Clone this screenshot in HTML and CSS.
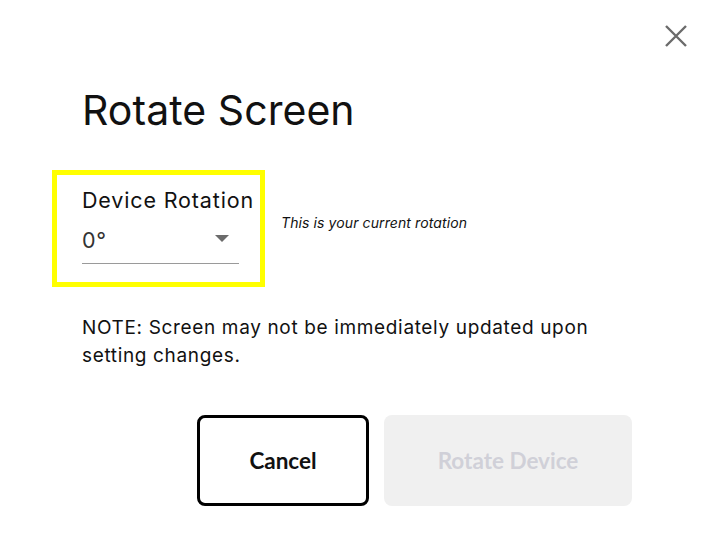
FILE: index.html
```html
<!DOCTYPE html>
<html>
<head>
<meta charset="utf-8">
<link rel="stylesheet" href="styles.css">
</head>
<body>
<div class="modal">
  <button class="close" aria-label="Close">
    <svg width="22" height="22" viewBox="0 0 22 22"><path d="M1 1 L21 21 M21 1 L1 21" stroke="#6b6b6b" stroke-width="2.4" fill="none"/></svg>
  </button>
  <h1 class="title">Rotate Screen</h1>
  <div class="row">
    <div class="field">
      <div class="label">Device Rotation</div>
      <div class="select">
        <span class="value">0°</span>
        <span class="arrow"></span>
      </div>
    </div>
    <div class="hint">This is your current rotation</div>
  </div>
  <p class="note">NOTE: Screen may not be immediately updated upon setting changes.</p>
  <div class="actions">
    <button class="btn cancel">Cancel</button>
    <button class="btn primary" disabled>Rotate Device</button>
  </div>
</div>
</body>
</html>
```
FILE: styles.css
```css
html, body { margin: 0; padding: 0; background: #fff; }
body { width: 714px; height: 553px; overflow: hidden; font-family: Inter, "Noto Sans", sans-serif; color: #111; }
.modal { position: relative; padding: 0 0 0 82px; height: 553px; box-sizing: border-box; }
.close { position: absolute; top: 25px; left: 665px; width: 22px; height: 22px; padding: 0; border: 0; background: none; cursor: pointer; }
.close svg { display: block; }
.title { margin: 0; padding-top: 86px; font-size: 41px; font-weight: 400; line-height: 48px; letter-spacing: 0.05px; color: #111; }
.row { display: flex; align-items: flex-start; margin-top: 36px; margin-left: -30px; }
.field { border: 5px solid #ffff00; padding: 11px 21px 18px 25px; width: 157px; }
.label { font-size: 21.5px; line-height: 28px; color: #111; white-space: nowrap; letter-spacing: 0.85px; }
.select { display: flex; align-items: center; justify-content: space-between; margin-top: 11px; height: 36px; border-bottom: 1px solid #9a9a9a; padding-bottom: 2px; }
.value { font-size: 21.5px; color: #333; line-height: 28px; margin-top: -6px; letter-spacing: 0.8px; }
.arrow { width: 0; height: 0; border-left: 7px solid transparent; border-right: 7px solid transparent; border-top: 7px solid #6b6b6b; margin-right: 10px; margin-top: -10px; }
.hint { font-size: 14px; font-style: italic; margin-left: 16px; margin-top: 44px; color: #111; letter-spacing: 0.1px; }
.note { margin: 27px 0 0; font-size: 19px; line-height: 28px; width: 545px; color: #111; letter-spacing: 0.65px; }
.actions { display: flex; gap: 15px; margin-top: 45px; margin-left: 115px; }
.btn { height: 91px; border-radius: 8px; font-family: Lato, "Open Sans", sans-serif; font-weight: 700; font-size: 22.5px; }
.cancel { width: 172px; background: #fff; border: 3px solid #000; color: #111; }
.primary { width: 248px; background: #f0f0f0; border: 0; color: #d0d0d8; }
```
